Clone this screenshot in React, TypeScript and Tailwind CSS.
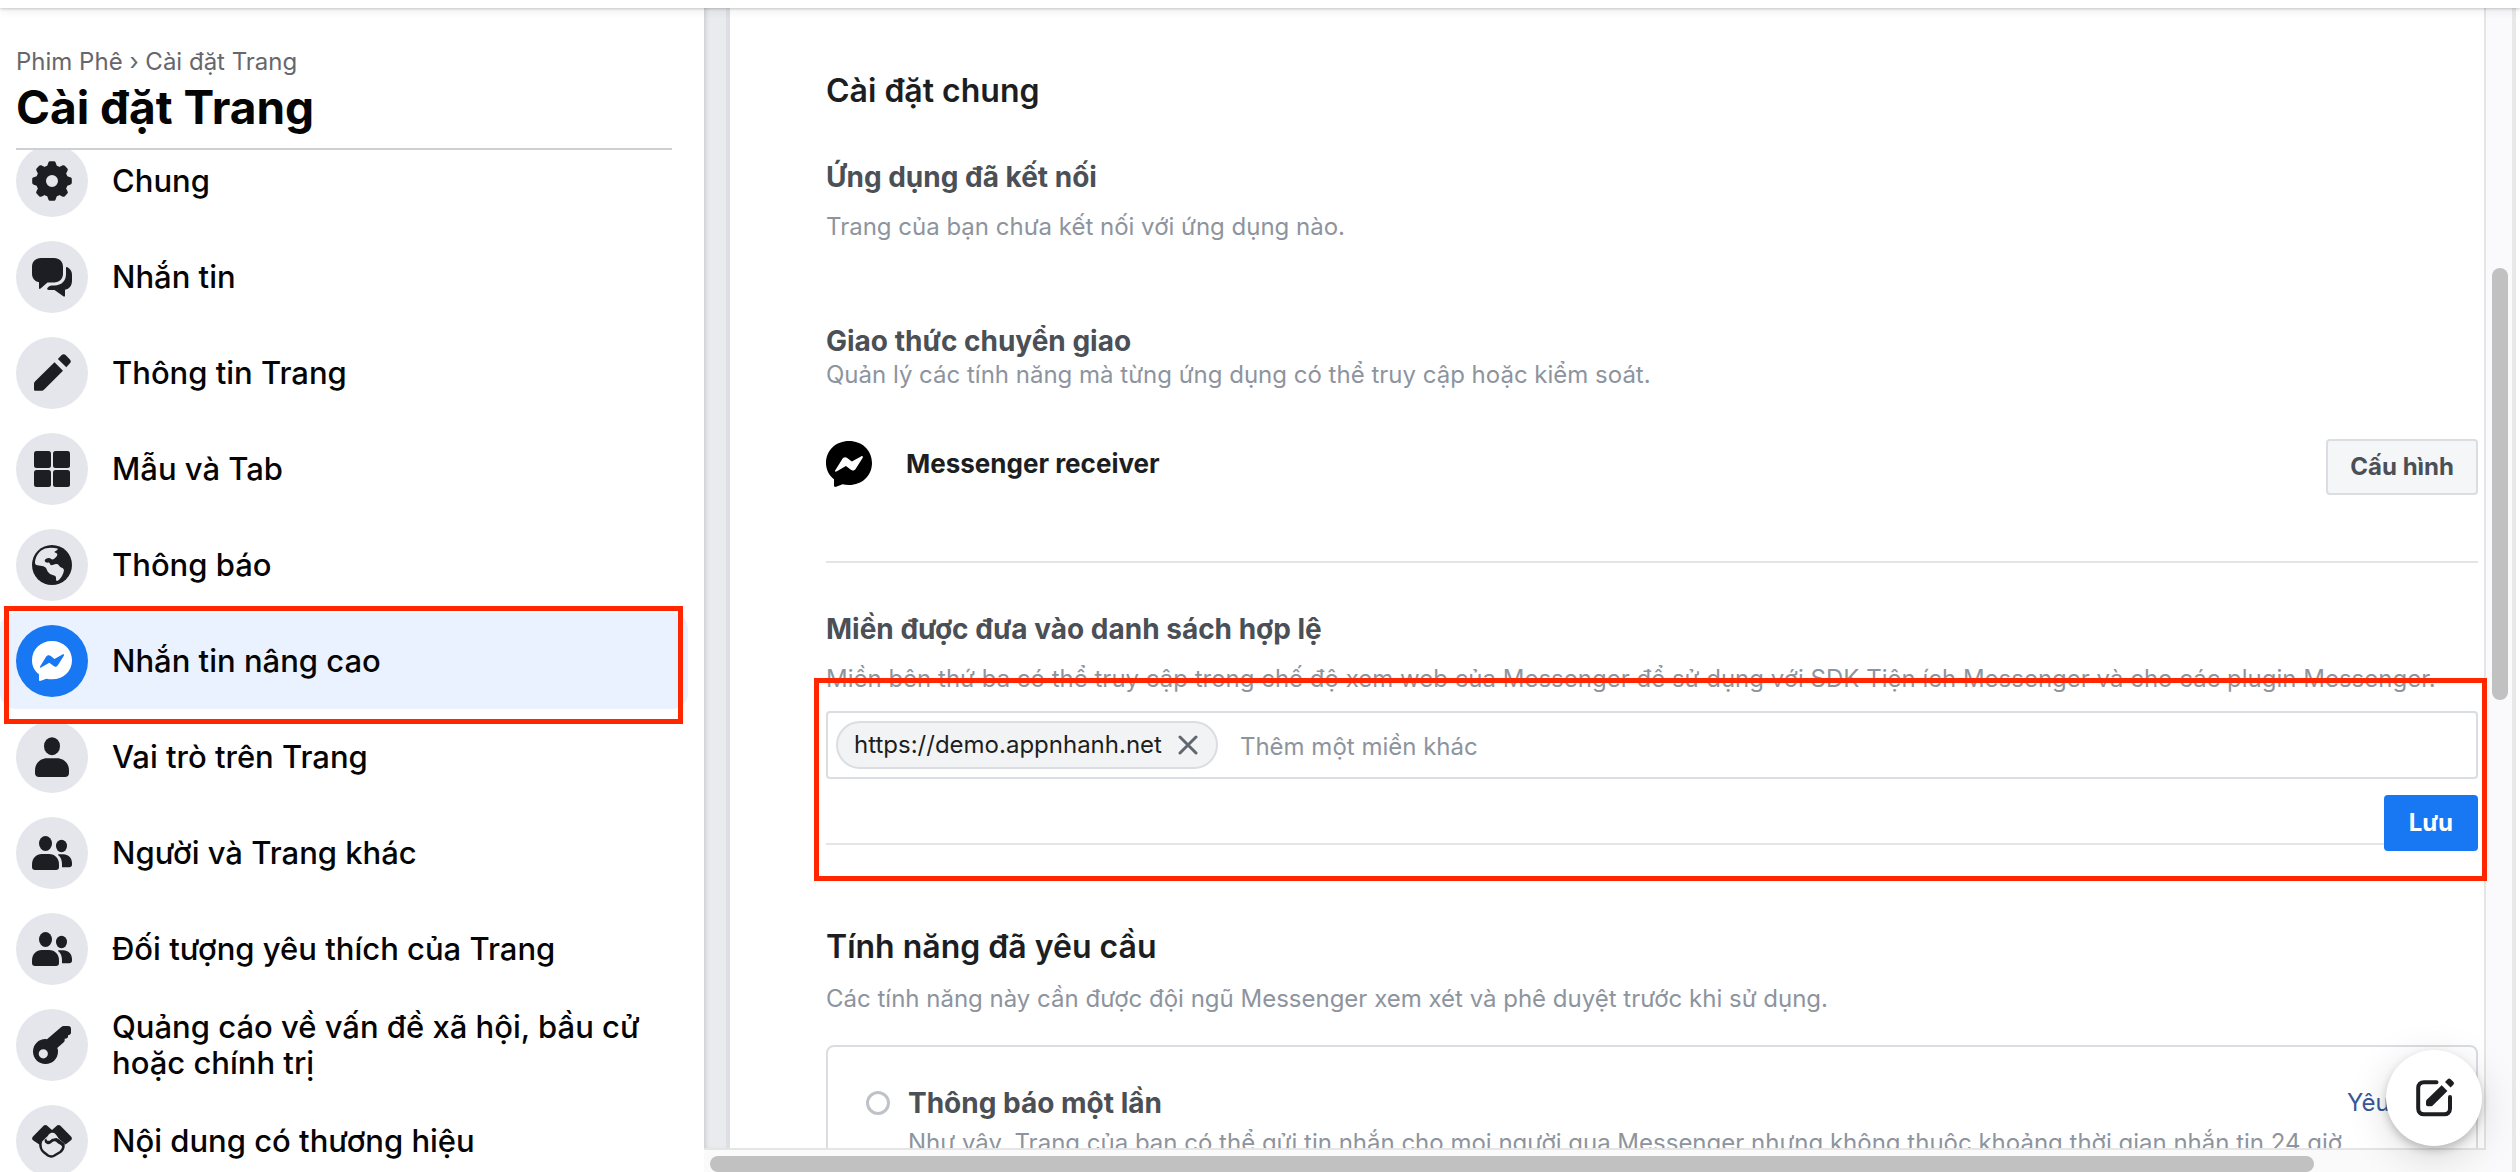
import React from "react";

const icon = { width: 40, height: 40, viewBox: "0 0 40 40", fill: "currentColor", "aria-hidden": true } as const;

function GearIcon() {
  return (
    <svg {...icon}>
      <circle cx="20" cy="20" r="11" fill="none" stroke="currentColor" strokeWidth="10" />
      {[0, 45, 90, 135, 180, 225, 270, 315].map((angle) => (
        <path
          key={angle}
          d="M14.5 7 L16.3 1.8 C16.7 .6 17.3 .2 18.4 .2 H21.6 C22.7 .2 23.3 .6 23.7 1.8 L25.5 7 Z"
          transform={`rotate(${angle} 20 20)`}
        />
      ))}
    </svg>
  );
}

function ChatIcon() {
  return (
    <svg {...icon}>
      <path d="M9 1H22C27.5 1 31 4.5 31 10V16.5C31 22 27.5 25.5 22 25.5H15.5L8.6 31.6C7.8 32.3 7 32 7 31V25.2C2.5 24.5 0 21 0 16.5V10C0 4.500 3.500 1 9 1Z" />
      <path d="M34 11C34 9.900 34.700 9.800 35.500 10.300C38.500 12 40 14.500 40 18V23.500C40 28.500 37.500 31.800 33 32.800V38.500C33 39.700 32.200 40 31.300 39.300L22.500 33H17C14.800 33 14.700 31.500 16 30.300L17 29.500C18 28.700 19 28.400 20.500 28.400H22.500C29.500 28.400 34 24 34 17Z" />
    </svg>
  );
}

function PencilIcon() {
  return (
    <svg {...icon}>
      <path d="M22.500 9.200L31 17.700L12.200 36.500C11.300 37.400 10.600 37.800 9.300 37.800H3.500C2.500 37.800 2 37.300 2 36.300V31.200C2 29.800 2.300 29.200 3.200 28.300Z" />
      <path d="M25.900 5.900L29.700 2.100C30.900 .9 32.400 .9 33.600 2.100L37.900 6.400C39.100 7.600 39.100 9.100 37.900 10.300L34.300 14.200Z" />
    </svg>
  );
}

function TilesIcon() {
  return (
    <svg {...icon}>
      <rect x="2" y="2" width="17" height="17" rx="2.500" />
      <rect x="21" y="2" width="17" height="17" rx="2.500" />
      <rect x="2" y="21" width="17" height="17" rx="2.500" />
      <rect x="21" y="21" width="17" height="17" rx="2.500" />
    </svg>
  );
}

function GlobeIcon() {
  return (
    <svg {...icon}>
      <circle cx="20" cy="20" r="20" />
      <path
        fill="#e4e6eb"
        d="M3 17C3.600 11 7.500 5.500 13 3.600C17 2.400 21 2.300 25.600 3.400C26.500 4.300 24.500 5.500 22.800 6.600C22 7.400 23.200 7.800 24.600 8.300C25.800 9 25.400 10.600 24.300 11.800C23.400 12.900 22.300 14 20.800 14.500C19 14.300 18.700 12.800 16.800 12.900C14.800 13 13 14 12.700 15.600C12.700 17.600 14.800 17.700 16.800 17.600C18.300 17.800 17.600 19.700 19 20.200C21 20.200 22.500 18.500 25 19C27 19.400 27 21.300 28.600 22.200C30.600 22.800 32.200 23.600 31.900 25.800C31.200 29.500 28.600 34.500 25.200 36C23.400 35.900 24.500 33.500 23.800 31.800C23 29.800 20.300 30.500 17.500 28.500C15 26.800 15.300 24.800 13.600 22.600C11.800 20.400 5 20.800 3.600 19.500C3 18.800 2.900 18 3 17Z"
      />
    </svg>
  );
}

function MessengerIcon({ size, bolt }: { size: number; bolt: string }) {
  return (
    <svg width={size} height={size} viewBox="0 0 46 46" fill="currentColor" aria-hidden="true">
      <path d="M23 0C36 0 46 9.300 46 22C46 34.700 36 44 23 44C20.600 44 18.400 43.700 16.500 43.300L10.200 45.800C9 46.200 8 45.700 8 44.500V38.300C3 34.400 0 28.700 0 22C0 9.300 10 0 23 0Z" />
      <path
        fill={bolt}
        d="M9.300 29.300L16 18.500C17.300 16.200 19.500 15.800 21.200 17.100L25.800 20.600L35 15.400C36.500 14.600 37.400 15.600 36.600 16.900L29.900 27.500C28.600 29.700 26.600 30.100 24.900 28.800L19.900 25.100L10.900 30.300C9.400 31.100 8.500 30.500 9.300 29.300Z"
      />
    </svg>
  );
}

function PersonIcon() {
  return (
    <svg {...icon}>
      <ellipse cx="20" cy="9.200" rx="8" ry="9" />
      <path d="M15 21.200H25C32 21.200 37 26.500 37 33.500V36C37 38.500 35.500 40 33 40H7C4.500 40 3 38.500 3 36V33.500C3 26.500 8 21.200 15 21.200Z" />
    </svg>
  );
}

function PeopleIcon() {
  return (
    <svg {...icon}>
      <ellipse cx="13.500" cy="10.500" rx="6.500" ry="7.500" />
      <path d="M10 21H17C23 21 27 25.500 27 31.500V34C27 36 26 37 24 37H3C1 37 0 36 0 34V31.500C0 25.500 4 21 10 21Z" />
      <ellipse cx="29.500" cy="13" rx="5.500" ry="6.200" />
      <path d="M27 21.300H31C36.500 21.300 40 25.200 40 30V31.500C40 33.300 39 34.300 37.200 34.300H30V31C30 27 28.600 24 26.300 22.300C25.800 21.800 26.200 21.300 27 21.300Z" />
    </svg>
  );
}

function KeyIcon() {
  return (
    <svg {...icon}>
      <path
        fillRule="evenodd"
        d="M15 14.200L29 2.300C30 1.400 31 1 32.400 1H36.200C38 1 39 2 39 3.800V7.500C39 8.800 38.300 9.600 37.300 9.900L36 10.300V11.600C36 12.600 35.300 13.300 34.300 13.500L32.700 13.800V15.300C32.700 16.200 32.300 17 31.500 17.600L25.200 23C26 24.200 26 25.500 26 26.500C26 33.500 20.500 39 13.500 39C6.500 39 1 33.500 1 26.500C1 19.500 6.500 14 13.500 14ZM11.300 24.200A4.600 4.600 0 1 0 11.300 33.400A4.600 4.600 0 1 0 11.300 24.200Z"
      />
    </svg>
  );
}

function HandshakeIcon() {
  return (
    <svg {...icon}>
      <path d="M1 15.500L11.300 5C12.600 3.800 14.300 3.800 15.500 5L20 9L24.500 5C25.700 3.800 27.400 3.800 28.700 5L39 15.500C40.200 16.800 40.200 18 39 19.200L33.500 23.500L26 17L20.500 12L14 17.500L8 24L1 19.200C-.2 18 -.2 16.800 1 15.500Z" />
      <path
        d="M8.600 22C8 25.500 9 28.500 11.500 31L16 34.500C18 35.800 20 35.700 22 34.700L28.300 31C30.500 29.300 31.800 26.500 31.500 23.500L25.500 18.600C24.300 17.800 23.300 18.600 21.500 18.700C19.500 18.700 19.300 21.300 16.800 20.800C15.300 20.400 15 19 16 17.500C17.500 14 19 11.500 22 11.500L18 11L9 20Z"
        fill="#e4e6eb"
        stroke="currentColor"
        strokeWidth="2.400"
        strokeLinejoin="round"
      />
      <path
        d="M13.800 19C13.300 22.300 17 23 19 20.700C21.500 18.300 24.500 19 26.300 21.200C28 22.700 29.500 22.500 31 25"
        fill="none"
        stroke="currentColor"
        strokeWidth="2.200"
        strokeLinecap="round"
      />
      <path d="M14.500 18.500C15.500 14.500 17.500 11.800 20.500 11.800C23 11.800 24 13.800 25.500 15.800L27 18.300C23.500 16 20 16.500 18.500 18.500C17.500 20 15 20.500 14.500 18.500Z" fill="#e4e6eb" />
    </svg>
  );
}

function ComposeIcon() {
  return (
    <svg width="40" height="40" viewBox="-2 0 40 40" fill="currentColor" aria-hidden="true">
      <path
        d="M20.500 4.200H8C4.500 4.200 2.200 6.500 2.200 10V30.500C2.200 34 4.500 36.300 8 36.300H28.200C31.700 36.300 34 34 34 30.500V19"
        fill="none"
        stroke="currentColor"
        strokeWidth="4"
        strokeLinecap="round"
      />
      <path d="M25.700 7.200L31.400 12.900L17 27.300C16.300 28 15.700 28.300 14.700 28.300H12C10.700 28.300 10 27.600 10 26.300V24C10 23 10.300 22.300 11 21.600Z" />
      <path d="M29 4L31.700 1.200C32.600 .3 33.800 .3 34.700 1.200L37.300 3.800C38.200 4.700 38.200 5.900 37.300 6.800L34.600 9.600Z" />
    </svg>
  );
}

function CloseIcon() {
  return (
    <svg width="20" height="20" viewBox="0 0 20 20" fill="none" stroke="currentColor" strokeWidth="3" strokeLinecap="round" aria-hidden="true">
      <path d="M2 2L18 18M18 2L2 18" />
    </svg>
  );
}

const menu = [
  { label: "Chung", icon: <GearIcon /> },
  { label: "Nhắn tin", icon: <ChatIcon /> },
  { label: "Thông tin Trang", icon: <PencilIcon /> },
  { label: "Mẫu và Tab", icon: <TilesIcon /> },
  { label: "Thông báo", icon: <GlobeIcon /> },
  { label: "Nhắn tin nâng cao", icon: <MessengerIcon size={40} bolt="#1877f2" />, active: true },
  { label: "Vai trò trên Trang", icon: <PersonIcon /> },
  { label: "Người và Trang khác", icon: <PeopleIcon /> },
  { label: "Đối tượng yêu thích của Trang", icon: <PeopleIcon /> },
  { label: "Quảng cáo về vấn đề xã hội, bầu cử hoặc chính trị", icon: <KeyIcon /> },
  { label: "Nội dung có thương hiệu", icon: <HandshakeIcon /> },
];

function Sidebar() {
  return (
    <aside className="flex w-[704px] shrink-0 flex-col bg-white">
      <header className="mr-8 ml-4 border-b-2 border-[#ced0d4] pt-[38px] pb-[15px]">
        <p className="text-[24px] leading-8 text-[#65676b]">
          <a href="#page">Phim Phê</a> › <a href="#settings">Cài đặt Trang</a>
        </p>
        <h1 className="mt-[3px] text-[46px] leading-[52px] font-bold text-[#050505]">Cài đặt Trang</h1>
      </header>
      <nav aria-label="Cài đặt Trang" className="min-h-0 flex-1 overflow-hidden">
        <ul className="-mt-[17px] mr-4">
          {menu.map((item) => (
            <li key={item.label} className="relative">
              <a
                href="#menu"
                aria-current={item.active ? "page" : undefined}
                className={
                  item.active
                    ? "flex h-24 items-center gap-6 rounded-2xl bg-[#eaf2ff] px-4"
                    : "flex h-24 items-center gap-6 px-4"
                }
              >
                <span
                  className={
                    item.active
                      ? "flex size-[72px] shrink-0 items-center justify-center rounded-full bg-[#1877f2] text-white"
                      : "flex size-[72px] shrink-0 items-center justify-center rounded-full bg-[#e4e6eb] text-[#1c1e21]"
                  }
                >
                  {item.icon}
                </span>
                <span className="text-[31px] leading-9 font-medium text-[#050505]">{item.label}</span>
              </a>
              {item.active && (
                <span className="pointer-events-none absolute -top-[7px] right-[5px] -bottom-[15px] left-1 z-10 border-5 border-[#ff2600]" />
              )}
            </li>
          ))}
        </ul>
      </nav>
    </aside>
  );
}

function General() {
  return (
    <section>
      <h2 className="text-[32px] leading-10 font-semibold text-[#1c1e21]">Cài đặt chung</h2>
      <h3 className="mt-12 text-[28px] leading-9 font-bold text-[#4b4f56]">Ứng dụng đã kết nối</h3>
      <p className="mt-4 text-[24px] leading-8 text-[#8d949e]">Trang của bạn chưa kết nối với ứng dụng nào.</p>
      <h3 className="mt-20 text-[28px] leading-9 font-bold text-[#4b4f56]">Giao thức chuyển giao</h3>
      <p className="text-[24px] leading-8 text-[#8d949e]">
        Quản lý các tính năng mà từng ứng dụng có thể truy cập hoặc kiểm soát.
      </p>
      <div className="mt-12 flex items-start justify-between">
        <div className="flex h-[50px] items-center gap-[34px]">
          <span className="text-black">
            <MessengerIcon size={46} bolt="#ffffff" />
          </span>
          <span className="text-[26px] leading-8 font-bold text-[#1c1e21]">Messenger receiver</span>
        </div>
        <button type="button" className="h-14 rounded border-2 border-[#dadde1] bg-[#f5f6f7] px-[22px] text-[24px] leading-8 font-bold text-[#4b4f56]">
          Cấu hình
        </button>
      </div>
    </section>
  );
}

function Domains() {
  return (
    <section className="mt-[66px] border-t-2 border-[#e5e5e5] pt-12">
      <h3 className="text-[28px] leading-9 font-bold text-[#4b4f56]">Miền được đưa vào danh sách hợp lệ</h3>
      <p className="mt-4 text-[24px] leading-8 whitespace-nowrap text-[#8d949e]">
        Miền bên thứ ba có thể truy cập trong chế độ xem web của Messenger để sử dụng với SDK Tiện ích Messenger và cho các plugin Messenger.
      </p>
      <div className="relative mt-4">
        <div className="flex h-[68px] items-center gap-[22px] rounded border-2 border-[#dadde1] px-2">
          <span className="flex h-12 items-center gap-4 rounded-full border-2 border-[#dadde1] bg-[#f2f3f4] pr-[18px] pl-4 text-[24px] leading-8 text-[#1c1e21]">
            https://demo.appnhanh.net
            <button type="button" aria-label="Gỡ miền" className="text-[#606770]">
              <CloseIcon />
            </button>
          </span>
          <input
            type="text"
            aria-label="Thêm một miền khác"
            placeholder="Thêm một miền khác"
            className="min-w-0 flex-1 bg-transparent pt-1 text-[24px] leading-8 text-[#1c1e21] outline-none placeholder:text-[#8d949e]"
          />
        </div>
        <div className="mt-4 flex h-[50px] justify-end border-b-2 border-[#e5e5e5]">
          <button type="button" className="h-14 rounded bg-[#1877f2] px-[25px] text-[24px] leading-8 font-bold text-white">
            Lưu
          </button>
        </div>
        <span className="pointer-events-none absolute -top-[33px] -right-[9px] -bottom-9 -left-3 z-10 border-5 border-[#ff2600]" />
      </div>
    </section>
  );
}

function Features() {
  return (
    <section className="mt-[82px]">
      <h2 className="text-[32px] leading-10 font-semibold text-[#1c1e21]">Tính năng đã yêu cầu</h2>
      <p className="mt-4 text-[24px] leading-8 text-[#8d949e]">
        Các tính năng này cần được đội ngũ Messenger xem xét và phê duyệt trước khi sử dụng.
      </p>
      <div className="mt-[30px] flex items-start gap-[18px] rounded-lg border-2 border-[#dadde1] px-[38px] pt-[38px] pb-10">
        <input
          id="one-time"
          type="radio"
          className="mt-1.5 size-6 shrink-0 appearance-none rounded-full border-3 border-[#bec3c9] bg-white"
        />
        <div className="flex min-w-0 flex-1 flex-col">
          <div className="flex justify-between">
            <label htmlFor="one-time" className="text-[28px] leading-9 font-bold text-[#4b4f56]">
              Thông báo một lần
            </label>
            <a href="#request" className="text-[24px] leading-9 text-[#385898]">
              Yêu cầu
            </a>
          </div>
          <p className="mt-1.5 text-[24px] leading-8 whitespace-nowrap text-[#8d949e]">
            Như vậy, Trang của bạn có thể gửi tin nhắn cho mọi người qua Messenger nhưng không thuộc khoảng thời gian nhắn tin 24 giờ
          </p>
        </div>
      </div>
    </section>
  );
}

export default function App() {
  return (
    <div className="relative flex h-screen flex-col overflow-hidden bg-white font-['Inter','Noto_Sans',sans-serif]">
      <div className="z-20 h-2 shrink-0 bg-white shadow-[0_1px_3px_rgba(0,0,0,0.2),0_4px_8px_rgba(0,0,0,0.06)]" />
      <div className="flex min-h-0 flex-1">
        <Sidebar />
        <div className="flex min-w-0 flex-1 flex-col">
          <div className="flex min-h-0 flex-1">
            <div className="w-[26px] shrink-0 border-r-4 border-[#dddfe4] bg-[#e9ebee] shadow-[inset_4px_0_4px_-2px_rgba(0,0,0,0.12)]" />
            <main className="min-w-0 flex-1 overflow-x-visible overflow-y-clip border-r-2 border-[#e5e5e5] bg-white pt-[63px] pr-1.5 pl-24">
              <General />
              <Domains />
              <Features />
            </main>
          </div>
          <div className="h-6 shrink-0 border-t-2 border-[#e5e5e5] bg-[#fafafa] px-1.5 pt-1.5">
            <div className="mr-[166px] h-4 rounded-full bg-[#c1c1c1]" />
          </div>
        </div>
        <div className="flex w-[26px] shrink-0 justify-end bg-[#fafafc] pt-[260px] pr-1">
          <div className="h-[432px] w-4 rounded-full bg-[#c1c1c1]" />
        </div>
        <div className="mr-1 w-1 shrink-0 bg-[#e8e8ea]" />
      </div>
      <button
        type="button"
        aria-label="Tin nhắn mới"
        className="absolute right-[38px] bottom-[26px] z-20 flex size-24 items-center justify-center rounded-full bg-white text-[#1c1e21] shadow-[0_4px_8px_rgba(0,0,0,0.2),0_10px_40px_rgba(0,0,0,0.15)]"
      >
        <ComposeIcon />
      </button>
    </div>
  );
}
